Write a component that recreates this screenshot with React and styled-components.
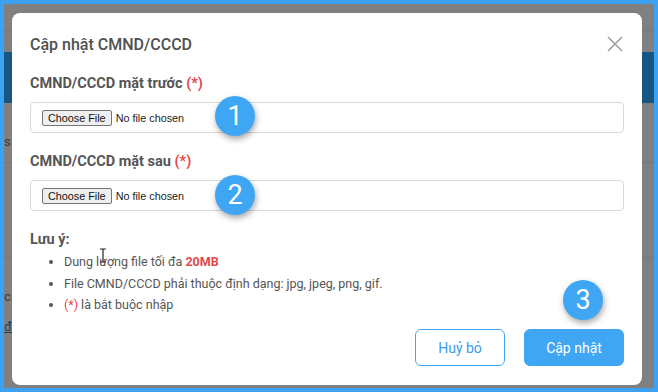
import React from "react";
import styled, { createGlobalStyle } from "styled-components";

const Global = createGlobalStyle`
  html, body { margin: 0; padding: 0; }
  body { font-family: Roboto, "Liberation Sans", Arial, sans-serif; }
`;

const BLUE = "#3fa6f4";

const Frame = styled.div`
  box-sizing: border-box;
  width: 658px;
  height: 392px;
  border: 4px solid #3ea2f2;
  background: #808080;
  position: relative;
  overflow: hidden;
`;

const Backdrop = styled.div`
  position: absolute;
  inset: 0;
  pointer-events: none;
`;

const BgBand = styled.div`
  position: absolute;
  left: 0;
  right: 0;
  top: 48px;
  height: 51px;
  background: #175583;
`;

const BgLine = styled.div`
  position: absolute;
  left: 0;
  right: 0;
  top: ${(p) => p.top}px;
  height: 1px;
  background: #767676;
`;

const BgText = styled.span`
  position: absolute;
  left: 0;
  top: ${(p) => p.top}px;
  font-size: 13px;
  text-decoration: ${(p) => (p.link ? "underline" : "none")};
  color: ${(p) => (p.link ? "#213f5c" : "#3a3a3a")};
`;

const Wrap = styled.div`
  position: relative;
  padding: 9px 12px 0 8px;
`;

const Modal = styled.div`
  box-sizing: border-box;
  width: 630px;
  height: 372px;
  background: #fff;
  border-radius: 8px;
  padding: 20px 18px 19px;
  display: flex;
  flex-direction: column;
  color: #555;
`;

const Header = styled.div`
  display: flex;
  align-items: center;
  justify-content: space-between;
  height: 22px;
  margin-bottom: 21px;
`;

const Title = styled.h2`
  margin: 0;
  font-size: 16px;
  font-weight: 500;
  color: #505050;
`;

const Close = styled.button`
  border: 0;
  background: none;
  padding: 0;
  width: 18px;
  height: 18px;
  display: flex;
  align-items: center;
  justify-content: center;
  cursor: pointer;
`;

const Field = styled.div`
  display: flex;
  flex-direction: column;
  margin-bottom: 21px;
`;

const Label = styled.label`
  font-size: 14.5px;
  font-weight: 700;
  color: #555;
  line-height: 16px;
  margin-bottom: 10px;
`;

const Req = styled.span`
  color: #e5484d;
`;

const FileBox = styled.div`
  position: relative;
  box-sizing: border-box;
  height: 31px;
  border: 1px solid #d9d9d9;
  border-radius: 4px;
  padding: 0 11px;
  display: flex;
  align-items: center;
`;

const FileInput = styled.input`
  font-family: "Liberation Sans", Arial, sans-serif;
  font-size: 10.8px;
  color: #222;
  &::file-selector-button {
    font-family: "Liberation Sans", Arial, sans-serif;
    font-size: 10.8px;
    height: 16px;
    padding: 0 5px;
    margin-right: 4px;
    background: #efefef;
    border: 1px solid #767676;
    border-radius: 2px;
    color: #111;
  }
`;

const Badge = styled.div`
  position: absolute;
  left: ${(p) => p.x}px;
  top: ${(p) => p.y}px;
  width: 40px;
  height: 40px;
  border-radius: 50%;
  background: ${BLUE};
  color: #fff;
  font-size: 27px;
  font-weight: 400;
  display: flex;
  align-items: center;
  justify-content: center;
  box-shadow: 1px 3px 6px rgba(0, 0, 0, 0.35);
`;

const Note = styled.div`
  font-size: 14.5px;
  font-weight: 700;
  color: #555;
  line-height: 16px;
`;

const List = styled.ul`
  margin: 3px 0 0;
  padding-left: 34px;
  font-size: 12.5px;
  line-height: 21.5px;
  color: #555;
  li {
    height: 21.5px;
  }
`;

const Strong = styled.b`
  color: #e5484d;
`;

const Footer = styled.div`
  margin-top: auto;
  display: flex;
  justify-content: flex-end;
  gap: 19px;
`;

const Btn = styled.button`
  position: relative;
  box-sizing: border-box;
  width: ${(p) => p.w}px;
  height: 37px;
  border-radius: 6px;
  font-family: Roboto, "Liberation Sans", Arial, sans-serif;
  font-size: 14px;
  border: 1px solid ${BLUE};
  background: ${(p) => (p.primary ? BLUE : "#fff")};
  color: ${(p) => (p.primary ? "#fff" : "#3a9be8")};
  cursor: pointer;
`;

const Cursor = styled.svg`
  position: absolute;
  left: 95px;
  top: 244px;
`;

export default function App() {
  return (
    <>
      <Global />
      <Frame>
        <Backdrop>
          <BgLine top={26} />
          <BgBand />
          <BgText top={130}>s</BgText>
          <BgLine top={158} />
          <BgLine top={253} />
          <BgText top={285}>c</BgText>
          <BgText top={315} link>
            đa
          </BgText>
        </Backdrop>
        <Wrap>
          <Modal>
            <Header>
              <Title>Cập nhật CMND/CCCD</Title>
              <Close aria-label="close">
                <svg width="16" height="16" viewBox="0 0 16 16">
                  <path d="M1 1L15 15M15 1L1 15" stroke="#a0a0a0" strokeWidth="1.6" />
                </svg>
              </Close>
            </Header>
            <Field>
              <Label>
                CMND/CCCD mặt trước <Req>(*)</Req>
              </Label>
              <FileBox>
                <FileInput type="file" />
                <Badge x={184} y={-7}>1</Badge>
              </FileBox>
            </Field>
            <Field>
              <Label>
                CMND/CCCD mặt sau <Req>(*)</Req>
              </Label>
              <FileBox>
                <FileInput type="file" />
                <Badge x={184} y={-6}>2</Badge>
              </FileBox>
            </Field>
            <Note>Lưu ý:</Note>
            <List>
              <li>
                Dung lượng file tối đa <Strong>20MB</Strong>
              </li>
              <li>File CMND/CCCD phải thuộc định dạng: jpg, jpeg, png, gif.</li>
              <li>
                <Req>(*)</Req> là bắt buộc nhập
              </li>
            </List>
            <Footer>
              <Btn w={90}>Huỷ bỏ</Btn>
              <Btn w={100} primary>
                Cập nhật
                <Badge x={38} y={-50}>3</Badge>
              </Btn>
            </Footer>
          </Modal>
          <Cursor width="8" height="15" viewBox="0 0 8 15">
            <path d="M1 1h6M4 1v13M1 14h6" stroke="#222" strokeWidth="1.2" fill="none" />
          </Cursor>
        </Wrap>
      </Frame>
    </>
  );
}
